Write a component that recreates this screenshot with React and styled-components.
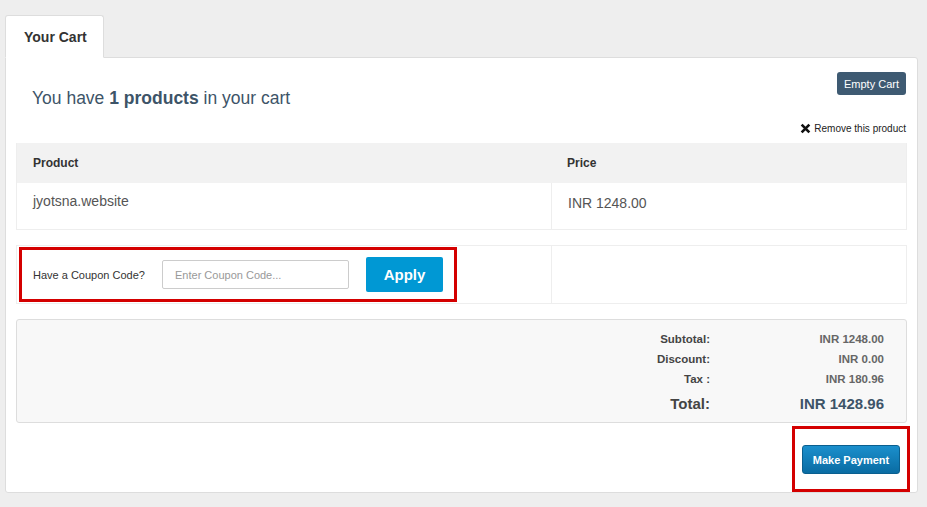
import React, { useState } from 'react'
import styled, { createGlobalStyle } from 'styled-components'

const GlobalStyle = createGlobalStyle`
    html, body {
        margin: 0;
        padding: 0;
        background: #eeeeee;
        font-family: "Liberation Sans", Arial, sans-serif;
    }
`;

function App() {
    const [coupon, setCoupon] = useState("");

    return (
        <>
            <GlobalStyle />
            <Page>
                <Tabs>
                    <Tab>Your Cart</Tab>
                </Tabs>
                <Panel>
                    <TopRow>
                        <Heading>You have <strong>1 products</strong> in your cart</Heading>
                        <EmptyButton>Empty Cart</EmptyButton>
                    </TopRow>
                    <RemoveRow>
                        <RemoveLink>
                            <svg width="11" height="11" viewBox="0 0 10 10">
                                <path d="M1.5 1.5 L8.5 8.5 M8.5 1.5 L1.5 8.5" stroke="#111" strokeWidth="2.4" />
                            </svg>
                            Remove this product
                        </RemoveLink>
                    </RemoveRow>
                    <CartTable>
                        <HeadCell>Product</HeadCell>
                        <HeadCell>Price</HeadCell>
                        <BodyCell>jyotsna.website</BodyCell>
                        <BodyCell $offset>INR 1248.00</BodyCell>
                    </CartTable>
                    <CouponTable>
                        <CouponCell>
                            <Highlight>
                                <CouponLabel>Have a Coupon Code?</CouponLabel>
                                <CouponInput
                                    type="text"
                                    placeholder="Enter Coupon Code..."
                                    value={coupon}
                                    onChange={(e) => setCoupon(e.target.value)} />
                                <ApplyButton>Apply</ApplyButton>
                            </Highlight>
                        </CouponCell>
                        <CouponCell />
                    </CouponTable>
                    <Summary>
                        <SumLabel>Subtotal:</SumLabel>
                        <SumValue>INR 1248.00</SumValue>
                        <SumLabel>Discount:</SumLabel>
                        <SumValue>INR 0.00</SumValue>
                        <SumLabel>Tax :</SumLabel>
                        <SumValue>INR 180.96</SumValue>
                        <SumLabel $total>Total:</SumLabel>
                        <SumValue $total>INR 1428.96</SumValue>
                    </Summary>
                    <PayRow>
                        <PayHighlight>
                            <PayButton>Make Payment</PayButton>
                        </PayHighlight>
                    </PayRow>
                </Panel>
            </Page>
        </>
    )
}

export default App

const Page = styled.div`
    padding: 15px 9px 0 5px;
    width: 927px;
    box-sizing: border-box;
`;
const Tabs = styled.div`
    display: flex;
    position: relative;
    z-index: 1;
    margin-bottom: -1px;
`;
const Tab = styled.div`
    background: #fff;
    border: 1px solid #ddd;
    border-bottom-color: #fff;
    border-radius: 3px 3px 0 0;
    color: #333;
    font-size: 14px;
    font-weight: 700;
    height: 43px;
    line-height: 42px;
    padding: 0 16px 0 18px;
    white-space: nowrap;
    box-sizing: border-box;
`;
const Panel = styled.div`
    background: #fff;
    border: 1px solid #ddd;
    border-radius: 0 3px 3px 3px;
    height: 436px;
    box-sizing: border-box;
    padding: 15px 10px 0 10px;
`;
const TopRow = styled.div`
    display: flex;
    justify-content: space-between;
    align-items: flex-start;
`;
const Heading = styled.h2`
    color: #3d5468;
    font-size: 17.5px;
    font-weight: 400;
    margin: 15px 0 0 16px;
    strong {
        font-weight: 700;
    }
`;
const EmptyButton = styled.button`
    background: #3e5a72;
    border: none;
    border-radius: 3px;
    color: #fff;
    font-family: inherit;
    font-size: 11px;
    height: 23px;
    padding: 0 7px;
    margin-top: -1px;
    margin-right: 1px;
`;
const RemoveRow = styled.div`
    display: flex;
    justify-content: flex-end;
    margin-top: 14px;
    margin-right: 1px;
`;
const RemoveLink = styled.span`
    align-items: center;
    color: #222;
    display: flex;
    font-size: 10px;
    gap: 3px;
`;
const CartTable = styled.div`
    display: grid;
    grid-template-columns: 534px 1fr;
    margin-top: 9px;
    border: 1px solid #eee;
    border-top: none;
`;
const HeadCell = styled.div`
    background: #f2f2f2;
    color: #333;
    font-size: 12px;
    font-weight: 700;
    height: 40px;
    line-height: 40px;
    padding-left: 16px;
`;
const BodyCell = styled.div`
    color: #555;
    font-size: 14px;
    height: 46px;
    padding: ${p => (p.$offset ? '12px' : '10px')} 0 0 16px;
    box-sizing: border-box;
    & + & {
        border-left: 1px solid #eee;
    }
`;
const CouponTable = styled.div`
    display: grid;
    grid-template-columns: 534px 1fr;
    margin-top: 15px;
    border: 1px solid #eee;
    height: 59px;
    box-sizing: border-box;
`;
const CouponCell = styled.div`
    display: flex;
    align-items: center;
    & + & {
        border-left: 1px solid #eee;
    }
`;
const Highlight = styled.div`
    align-items: center;
    border: 3px solid #d40000;
    display: flex;
    height: 55px;
    width: 438px;
    box-sizing: border-box;
    padding-left: 11px;
    margin-left: 2px;
`;
const CouponLabel = styled.label`
    color: #333;
    font-size: 11px;
    width: 129px;
`;
const CouponInput = styled.input`
    border: 1px solid #ccc;
    border-radius: 2px;
    box-sizing: border-box;
    font-family: inherit;
    font-size: 11px;
    height: 29px;
    padding: 0 12px;
    width: 187px;
    &::placeholder {
        color: #999;
    }
`;
const ApplyButton = styled.button`
    background: #0098d4;
    border: none;
    border-radius: 2px;
    color: #fff;
    font-family: inherit;
    font-size: 15px;
    font-weight: 700;
    height: 35px;
    margin-left: 17px;
    width: 77px;
`;
const Summary = styled.div`
    background: #f8f8f8;
    border: 1px solid #ddd;
    border-radius: 3px;
    box-sizing: border-box;
    display: grid;
    grid-template-columns: 1fr 174px;
    height: 104px;
    margin-top: 15px;
    padding: 9px 22px 0 0;
    align-content: start;
`;
const SumLabel = styled.div`
    color: #444;
    font-size: ${p => (p.$total ? '15px' : '11.5px')};
    font-weight: 700;
    line-height: 20px;
    margin-top: ${p => (p.$total ? '5px' : '0')};
    text-align: right;
`;
const SumValue = styled.div`
    color: ${p => (p.$total ? '#3d5468' : '#666')};
    font-size: ${p => (p.$total ? '15px' : '11.5px')};
    font-weight: 700;
    line-height: 20px;
    margin-top: ${p => (p.$total ? '5px' : '0')};
    text-align: right;
`;
const PayRow = styled.div`
    display: flex;
    justify-content: flex-end;
    margin-top: 3px;
    margin-right: -3px;
`;
const PayHighlight = styled.div`
    border: 3px solid #d40000;
    box-sizing: border-box;
    display: flex;
    height: 66px;
    width: 118px;
    padding: 16px 0 0 7px;
`;
const PayButton = styled.button`
    background: linear-gradient(#1b8fcc, #0a6ca3);
    border: 1px solid #0a5f8f;
    border-radius: 3px;
    color: #fff;
    font-family: inherit;
    font-size: 11px;
    font-weight: 700;
    height: 29px;
    width: 98px;
    padding: 0;
`;
